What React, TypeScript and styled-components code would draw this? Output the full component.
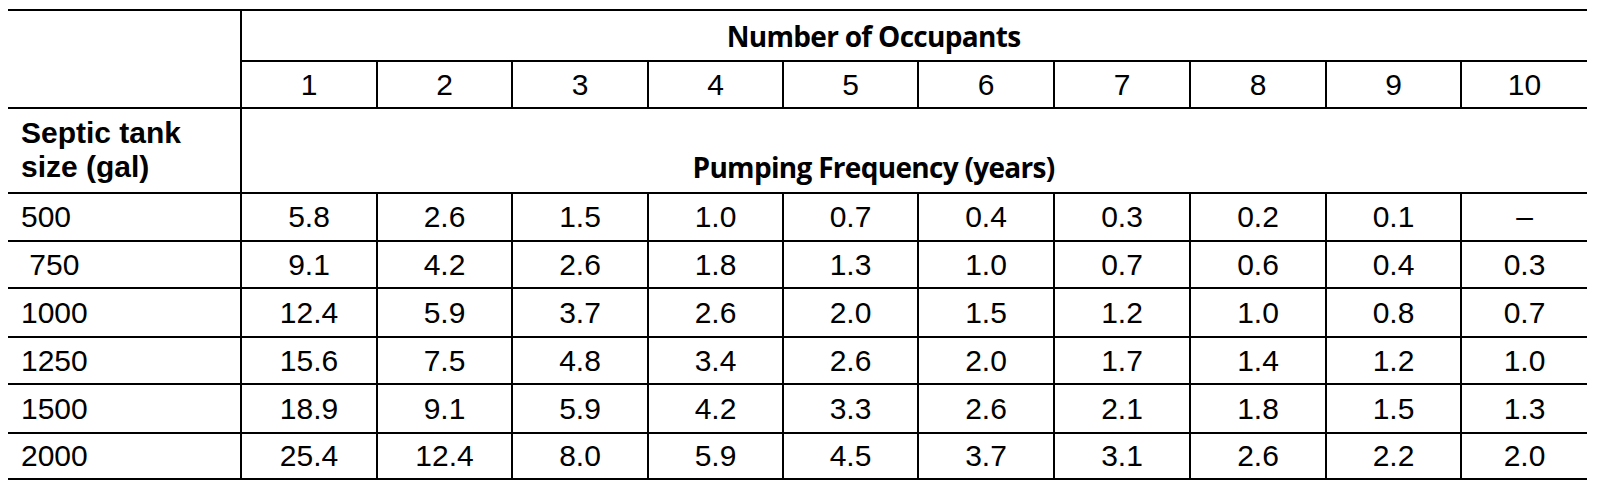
import React from "react";
import styled, { createGlobalStyle } from "styled-components";

const Global = createGlobalStyle`
  html, body { margin: 0; padding: 0; background: #fff; }
  body { padding: 9px 0 0 8px; font-family: "Liberation Sans", Arial, sans-serif; color: #000; }
`;

const Table = styled.table`
  border-collapse: collapse;
  table-layout: fixed;
  width: 1579px;
  font-family: "Liberation Sans", Arial, sans-serif;
  font-size: 30px;
  color: #000;
`;

const Row = styled.tr<{ $h: number }>`
  height: ${(p) => p.$h}px;
`;

const Corner = styled.td`
  border-top: 2px solid #000;
  border-bottom: 2px solid #000;
  border-right: 2px solid #000;
  padding: 0;
`;

const Title = styled.th`
  font-family: "Open Sans", "Noto Sans", sans-serif;
  font-weight: 700;
  font-size: 28px;
  letter-spacing: -0.7px;
  line-height: 34px;
  text-align: center;
  padding: 0 82px 0 0;
  border-top: 2px solid #000;
  border-bottom: 2px solid #000;
  vertical-align: middle;
`;

const SubTitle = styled(Title)`
  border-top: none;
  vertical-align: bottom;
  padding-bottom: 8px;
`;

const NumHead = styled.th`
  font-weight: 400;
  text-align: center;
  vertical-align: middle;
  padding: 0;
  border-bottom: 2px solid #000;
  border-left: 2px solid #000;
`;

const RowLabel = styled.th`
  font-weight: 700;
  text-align: left;
  vertical-align: bottom;
  line-height: 34px;
  padding: 0 0 8px 13px;
  border-top: 2px solid #000;
  border-bottom: 2px solid #000;
  border-right: 2px solid #000;
`;

const Size = styled.td`
  text-align: left;
  vertical-align: middle;
  padding: 0 0 0 13px;
  border-bottom: 2px solid #000;
  border-right: 2px solid #000;
  white-space: pre;
`;

const Cell = styled.td`
  text-align: center;
  vertical-align: middle;
  padding: 0;
  border-bottom: 2px solid #000;
  border-left: 2px solid #000;
`;

const colWidths = [233, 136, 135, 136, 135, 135, 136, 136, 136, 135, 126];

const data: { size: string; values: string[]; h: number }[] = [
  { size: "500", values: ["5.8", "2.6", "1.5", "1.0", "0.7", "0.4", "0.3", "0.2", "0.1", "–"], h: 48 },
  { size: " 750", values: ["9.1", "4.2", "2.6", "1.8", "1.3", "1.0", "0.7", "0.6", "0.4", "0.3"], h: 47 },
  { size: "1000", values: ["12.4", "5.9", "3.7", "2.6", "2.0", "1.5", "1.2", "1.0", "0.8", "0.7"], h: 49 },
  { size: "1250", values: ["15.6", "7.5", "4.8", "3.4", "2.6", "2.0", "1.7", "1.4", "1.2", "1.0"], h: 47 },
  { size: "1500", values: ["18.9", "9.1", "5.9", "4.2", "3.3", "2.6", "2.1", "1.8", "1.5", "1.3"], h: 49 },
  { size: "2000", values: ["25.4", "12.4", "8.0", "5.9", "4.5", "3.7", "3.1", "2.6", "2.2", "2.0"], h: 46 },
];

export default function App() {
  return (
    <>
      <Global />
      <Table>
        <colgroup>
          {colWidths.map((w, i) => (
            <col key={i} style={{ width: w }} />
          ))}
        </colgroup>
        <tbody>
          <Row $h={51}>
            <Corner rowSpan={2} />
            <Title colSpan={10}>Number of Occupants</Title>
          </Row>
          <Row $h={47}>
            {Array.from({ length: 10 }, (_, i) => (
              <NumHead key={i}>{i + 1}</NumHead>
            ))}
          </Row>
          <Row $h={85}>
            <RowLabel>
              Septic tank
              <br />
              size (gal)
            </RowLabel>
            <SubTitle colSpan={10}>Pumping Frequency (years)</SubTitle>
          </Row>
          {data.map((r) => (
            <Row key={r.size} $h={r.h}>
              <Size>{r.size}</Size>
              {r.values.map((v, i) => (
                <Cell key={i}>{v}</Cell>
              ))}
            </Row>
          ))}
        </tbody>
      </Table>
    </>
  );
}
